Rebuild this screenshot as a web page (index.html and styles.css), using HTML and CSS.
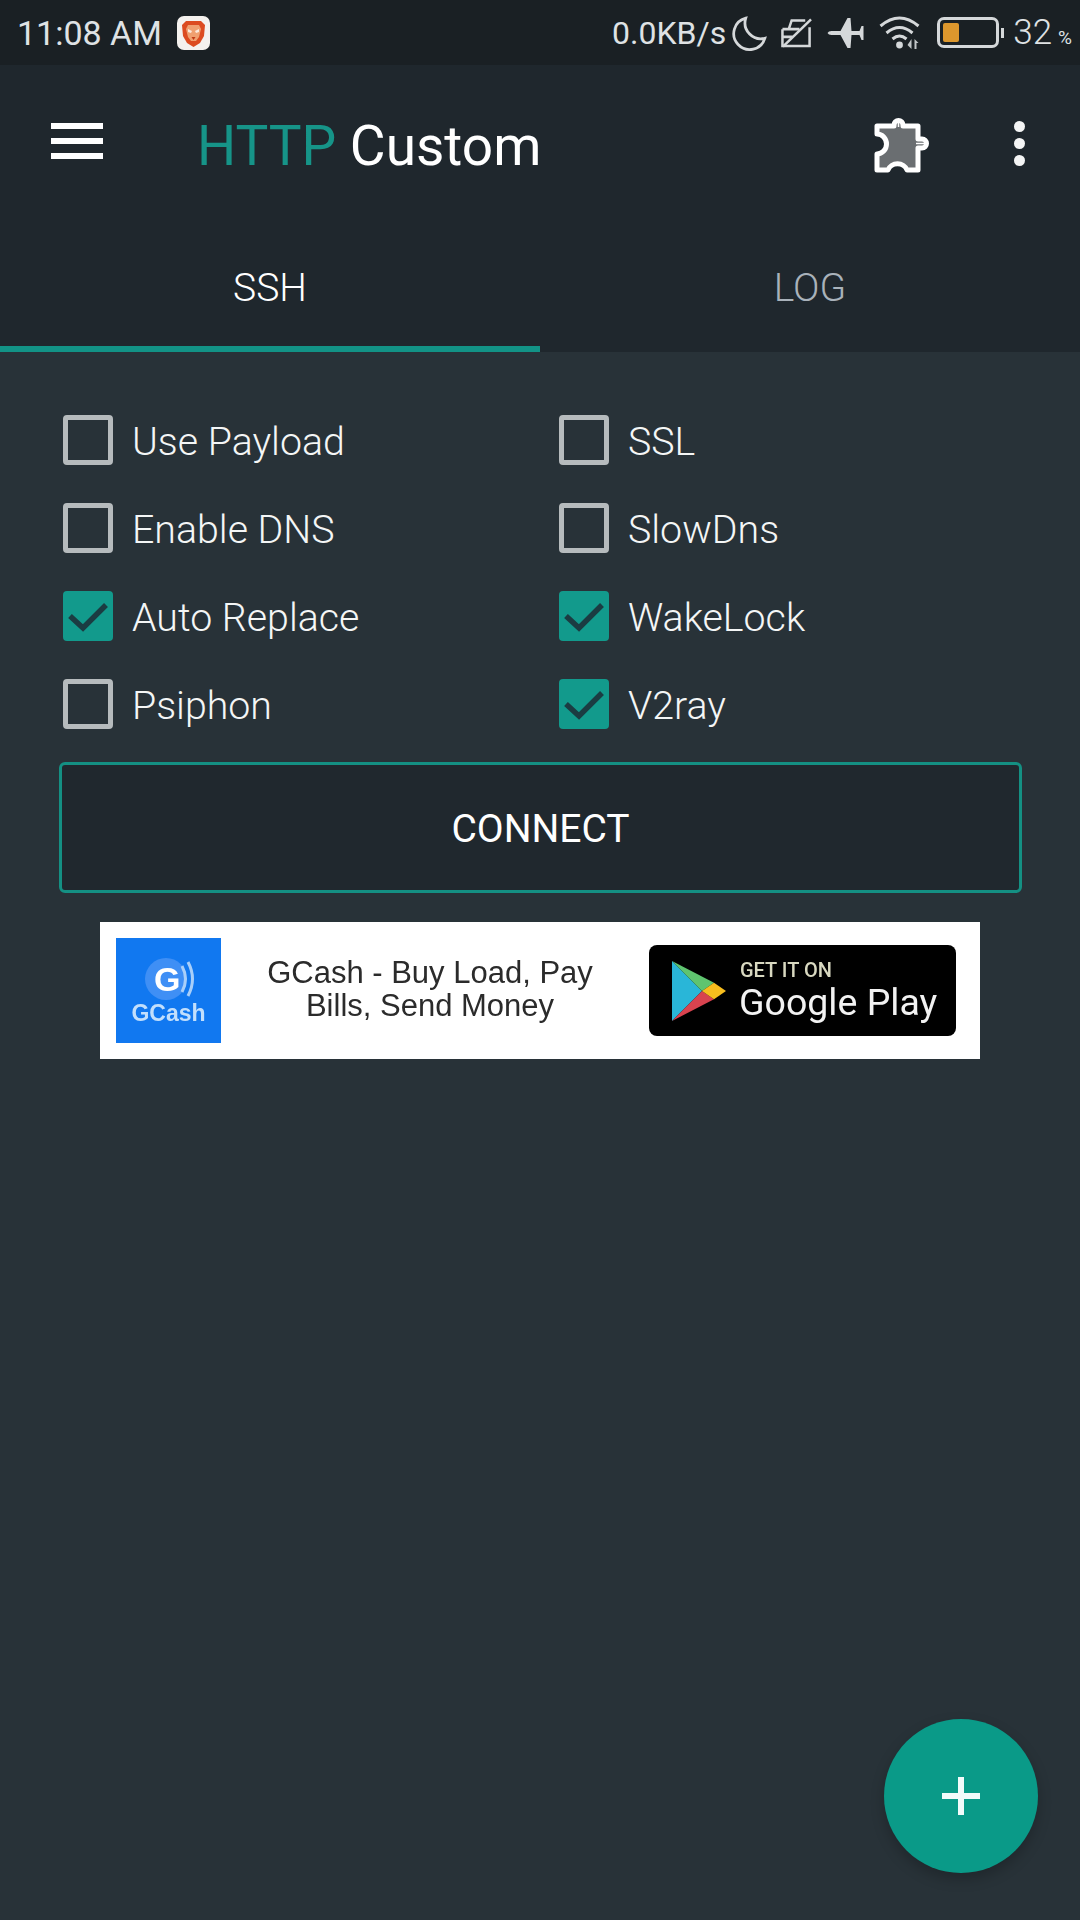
FILE: index.html
```html
<!DOCTYPE html>
<html lang="en">
<head>
  <meta charset="UTF-8"/>
  <meta name="viewport" content="width=device-width, initial-scale=1.0"/>
  <title>HTTP Custom</title>
  <link rel="stylesheet" href="styles.css">
</head>
<body>
<div class="phone">
  <!-- Status bar -->
  <header class="status-bar">
    <div class="status-left">
      <span class="time">11:08 AM</span>
      <svg class="brave" viewBox="0 0 33 34">
        <rect x="0" y="0" width="33" height="34" rx="7" fill="#f4f1ee"/>
        <path d="M9 5 H24 L28 9 L27 20 L23 27 L16.5 31 L10 27 L6 20 L5 9 Z" fill="#dc4b20"/>
        <path d="M11 9 H22 L24 13 L22 21 L19 25 H14 L11 21 L9 13 Z" fill="#f0a070"/>
        <path d="M11 13 L15 15 L14 17 L11 16 Z M22 13 L18 15 L19 17 L22 16 Z" fill="#fbe9dc"/>
        <path d="M14.5 21 H18.5 L16.5 24 Z" fill="#c03a14"/>
      </svg>
    </div>
    <div class="status-right">
      <span class="speed">0.0KB/s</span>
      <svg class="st-moon" viewBox="0 0 34 34"><path d="M13 3 A15 15 0 1 0 31 22 A15 15 0 0 1 13 3 Z" fill="none" stroke="#d5d8da" stroke-width="2.6"/></svg>
      <svg class="st-sim" viewBox="0 0 32 32">
        <path d="M1.5 12 V29.5 H29.5 V10 M1.5 12 H19 M8 12 L11 3 H25 M1.5 20 H12" fill="none" stroke="#d5d8da" stroke-width="2.6"/>
        <path d="M2 30 L31 2" stroke="#d5d8da" stroke-width="2.6"/>
      </svg>
      <svg class="st-plane" viewBox="0 0 36 32"><path d="M0 16 Q1 14 4 14 H13 L20 1 H23 L24 14 H32 L34 9 H36 V23 H34 L32 18 H24 L23 31 H20 L13 18 H4 Q1 18 0 16 Z" fill="#d5d8da"/></svg>
      <svg class="st-wifi" viewBox="0 0 42 34">
        <path d="M2 10 Q21 -6 40 10 M8 17 Q21 6 34 17 M14 23 Q21 17 28 23" fill="none" stroke="#d5d8da" stroke-width="3"/>
        <circle cx="21" cy="29" r="3.4" fill="#d5d8da"/>
        <path d="M33 23 V33 L29 29 Z M36 23 L40 27 L36 27 Z M36 27 H38 V33 H36 Z" fill="#c2c6c8"/>
      </svg>
      <div class="battery"><div class="battery-body"><div class="battery-fill"></div></div><div class="battery-tip"></div></div>
      <span class="pct">32<small>%</small></span>
    </div>
  </header>

  <!-- Toolbar -->
  <div class="toolbar">
    <div class="menu-icon"><span></span><span></span><span></span></div>
    <h1 class="title"><span class="accent">HTTP</span> Custom</h1>
    <svg class="puzzle" viewBox="870 116 66 66">
      <path d="M878 130 H895 V129 A4.5 4.5 0 0 1 904 129 V130 H919 V143 H923 A4.5 4.5 0 0 1 923 152 H919 V174 H908 A10 9 0 0 0 889 174 H878 V158 A9.5 10 0 0 0 878 138 Z" fill="#6a6e71" stroke="#fff" stroke-width="5" stroke-linejoin="round"/>
      <path d="M899.5 123 V131 M917 147.5 H927" stroke="#fff" stroke-width="1.5" fill="none"/>
    </svg>
    <div class="more-icon"><span></span><span></span><span></span></div>
  </div>

  <!-- Tabs -->
  <nav class="tabs">
    <div class="tab active">SSH</div>
    <div class="tab">LOG</div>
  </nav>

  <main class="content">
    <div class="options">
      <label class="option"><span class="box"></span>Use Payload</label>
      <label class="option"><span class="box"></span>SSL</label>
      <label class="option"><span class="box"></span>Enable DNS</label>
      <label class="option"><span class="box"></span>SlowDns</label>
      <label class="option"><span class="box checked"><svg viewBox="0 0 50 50"><path d="M7 25 L20 37 L43 14" fill="none" stroke="#1b3c42" stroke-width="5.5"/></svg></span>Auto Replace</label>
      <label class="option"><span class="box checked"><svg viewBox="0 0 50 50"><path d="M7 25 L20 37 L43 14" fill="none" stroke="#1b3c42" stroke-width="5.5"/></svg></span>WakeLock</label>
      <label class="option"><span class="box"></span>Psiphon</label>
      <label class="option"><span class="box checked"><svg viewBox="0 0 50 50"><path d="M7 25 L20 37 L43 14" fill="none" stroke="#1b3c42" stroke-width="5.5"/></svg></span>V2ray</label>
    </div>

    <button class="connect">CONNECT</button>

    <!-- Ad banner -->
    <div class="ad">
      <div class="ad-icon">
        <svg viewBox="0 0 105 62">
          <circle cx="50" cy="33" r="21" fill="#3f8ff5"/>
          <path d="M66 20 Q73 33 66 46 M72 16 Q81 33 72 50" fill="none" stroke="#a9cff9" stroke-width="3"/>
        </svg>
        <span class="ad-g">G</span>
        <span class="ad-brand">GCash</span>
      </div>
      <div class="ad-text">GCash - Buy Load, Pay<br>Bills, Send Money</div>
      <div class="play-badge">
        <svg class="play-logo" viewBox="0 0 54 66" preserveAspectRatio="none">
          <path d="M0 0 L30 33 L0 66 Z" fill="#29b6d8"/>
          <path d="M0 0 L42 24 L30 33 Z" fill="#5fc46f"/>
          <path d="M0 66 L42 42 L30 33 Z" fill="#d8434f"/>
          <path d="M42 24 L54 33 L42 42 L30 33 Z" fill="#f7bd1e"/>
        </svg>
        <div class="play-words">
          <span class="get-it">GET IT ON</span>
          <span class="gplay">Google Play</span>
        </div>
      </div>
    </div>
  </main>

  <button class="fab"><span class="plus"></span></button>
</div>
</body>
</html>
```

FILE: styles.css
```css
/* General layout */
* {
    box-sizing: border-box;
}

html, body {
    margin: 0;
    padding: 0;
}

body {
    font-family: Roboto, "Liberation Sans", sans-serif;
    background: #283238;
    color: #fff;
}

.phone {
    position: relative;
    width: 1080px;
    height: 1920px;
    display: flex;
    flex-direction: column;
    overflow: hidden;
}

/* Status bar */
.status-bar {
    height: 65px;
    flex: none;
    background: #1a2024;
    display: flex;
    justify-content: space-between;
    align-items: center;
    color: #dfe2e4;
    padding: 0 8px 0 17px;
}

.status-left, .status-right {
    display: flex;
    align-items: center;
}

.time {
    font-size: 34px;
    width: 160px;
}

.brave {
    width: 33px;
    height: 34px;
}

.speed {
    font-size: 32px;
    margin-right: 6px;
}

.st-moon {
    width: 36px;
    height: 36px;
    margin-right: 13px;
}

.st-sim {
    width: 31px;
    height: 32px;
    margin-right: 15px;
}

.st-plane {
    width: 37px;
    height: 32px;
    margin-right: 14px;
}

.st-wifi {
    width: 43px;
    height: 34px;
    margin-right: 16px;
}

.battery {
    display: flex;
    align-items: center;
    margin-right: 9px;
}

.battery-body {
    width: 62px;
    height: 31px;
    border: 3px solid #d5d8da;
    border-radius: 7px;
    padding: 3px;
}

.battery-fill {
    width: 16px;
    height: 100%;
    background: #dc972d;
    border-radius: 2px;
}

.battery-tip {
    width: 3px;
    height: 10px;
    margin-left: 2px;
    background: #d5d8da;
}

.pct {
    font-size: 35px;
    font-weight: 300;
}

.pct small {
    font-size: 19px;
    font-weight: 400;
    margin-left: 6px;
}

/* Toolbar */
.toolbar {
    height: 150px;
    flex: none;
    background: #1f272d;
    position: relative;
    display: flex;
    align-items: center;
    padding: 12px 0 0 51px;
}

.menu-icon {
    width: 52px;
    margin-bottom: 10px;
    display: flex;
    flex-direction: column;
    gap: 9px;
}

.menu-icon span {
    height: 6px;
    background: #fff;
}

.title {
    margin: 0 0 0 94px;
    font-size: 55px;
    font-weight: 400;
    line-height: 1;
    color: #fff;
}

.accent {
    color: #169488;
}

.puzzle {
    width: 66px;
    height: 66px;
    margin-left: auto;
    margin-bottom: 2px;
}

.more-icon {
    display: flex;
    flex-direction: column;
    gap: 6px;
    margin: 0 55px 5px 79px;
}

.more-icon span {
    width: 11px;
    height: 11px;
    border-radius: 50%;
    background: #f4f5f5;
}

/* Tabs */
.tabs {
    height: 137px;
    flex: none;
    background: #1f272d;
    display: flex;
}

.tab {
    width: 540px;
    text-align: center;
    font-size: 39px;
    padding-top: 50px;
    color: #a9b2ba;
    font-weight: 300;
}

.tab.active {
    color: #fff;
    border-bottom: 6px solid #129386;
}

/* Options and connect */
.content {
    flex: 1;
    padding-top: 44px;
    background: #283238;
}

.options {
    display: grid;
    grid-template-columns: 496px 1fr;
    padding-left: 63px;
    grid-auto-rows: 88px;
}

.option {
    display: flex;
    align-items: center;
    padding-top: 4px;
    font-size: 39.3px;
    font-weight: 300;
    line-height: 52px;
    color: #f4f6f6;
}

.box {
    width: 50px;
    height: 50px;
    margin: -4px 19px 0 0;
    border: 5px solid #b6bbbd;
    border-radius: 4px;
    flex: none;
}

.box.checked {
    background: #129a8c;
    border: none;
}

.box svg {
    display: block;
}

.connect {
    display: block;
    width: 963px;
    height: 131px;
    margin: 14px 0 0 59px;
    padding-top: 4px;
    background: #20282e;
    border: 3px solid #149083;
    border-radius: 6px;
    color: #fff;
    font-family: Roboto, sans-serif;
    font-size: 39px;
}

/* Ad banner */
.ad {
    width: 880px;
    height: 137px;
    margin: 29px 0 0 100px;
    background: #fff;
    display: flex;
    align-items: center;
    padding: 0 24px 0 16px;
}

.ad-icon {
    position: relative;
    width: 105px;
    height: 105px;
    flex: none;
    background: #1178f0;
    text-align: center;
    filter: blur(0.7px);
}

.ad-icon svg {
    position: absolute;
    left: 0;
    top: 8px;
    width: 105px;
    height: 62px;
}

.ad-g {
    position: absolute;
    left: 38px;
    top: 24px;
    font-family: "Liberation Sans", sans-serif;
    font-size: 34px;
    font-weight: bold;
    line-height: 1;
    color: #fff;
}

.ad-brand {
    position: absolute;
    left: 0;
    right: 0;
    bottom: 18px;
    font-family: "Liberation Sans", sans-serif;
    font-size: 23px;
    font-weight: bold;
    line-height: 1;
    color: #c2dffc;
}

.ad-text {
    flex: 1;
    text-align: center;
    font-family: "Liberation Sans", sans-serif;
    font-size: 31px;
    line-height: 33px;
    color: #2b2b2b;
    padding: 0 10px 4px 0;
    filter: blur(0.7px);
}

.play-badge {
    width: 307px;
    height: 91px;
    flex: none;
    background: #000;
    border-radius: 8px;
    display: flex;
    align-items: center;
    padding-left: 23px;
    filter: blur(0.7px);
}

.play-logo {
    width: 54px;
    height: 60px;
    margin-right: 13px;
}

.play-words {
    display: flex;
    flex-direction: column;
    font-family: Roboto, sans-serif;
    line-height: 1;
}

.get-it {
    font-size: 20px;
    font-weight: 500;
    color: #d8d8c0;
    margin-bottom: 4px;
    padding-left: 1px;
}

.gplay {
    font-size: 37.5px;
    color: #f2f2f2;
}

/* Floating add button */
.fab {
    position: absolute;
    left: 884px;
    top: 1719px;
    width: 154px;
    height: 154px;
    border: none;
    border-radius: 50%;
    background: #0a9a88;
    box-shadow: 0 6px 14px rgba(0, 0, 0, 0.22);
    display: flex;
    align-items: center;
    justify-content: center;
}

.plus {
    position: relative;
    width: 38px;
    height: 6px;
    background: #f2fbfa;
}

.plus::after {
    content: "";
    position: absolute;
    left: 16px;
    top: -16px;
    width: 6px;
    height: 38px;
    background: #f2fbfa;
}
```
